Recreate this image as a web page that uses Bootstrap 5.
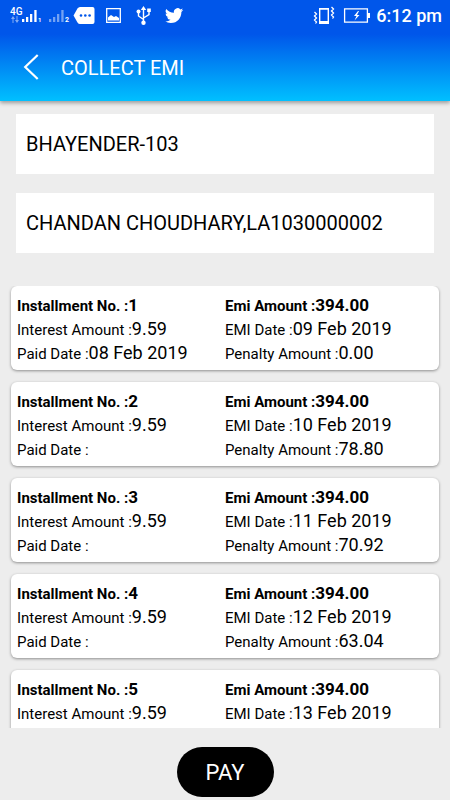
<!DOCTYPE html>
<html lang="en">
<head>
<meta charset="utf-8">
<meta name="viewport" content="width=device-width, initial-scale=1">
<title>Collect EMI</title>
<link href="https://cdn.jsdelivr.net/npm/bootstrap@5.3.0/dist/css/bootstrap.min.css" rel="stylesheet">
<style>
  body { font-family: Roboto, "Liberation Sans", sans-serif; background: #ededed; color: #000; }
  .app-top { background: linear-gradient(#0056ea 0, #0056ea 34px, #00c0ff 100%); box-shadow: 0 2px 4px rgba(0,0,0,.35); }
  .status-bar { height: 34px; padding: 0 8px 2px 10px; }
  .status-bar svg { flex: none; display: block; }
  .status-end { gap: 5px; }
  .clock { font-size: 18px; font-weight: 500; line-height: 32px; }
  .title-bar { height: 67px; padding: 0 22px; gap: 20px; }
  .title-bar h1 { font-size: 20px; line-height: 24px; font-weight: 400; }
  .back-btn { line-height: 0; }
  .fields { padding: 13px 16px 33px; gap: 19px; }
  .form-control.field { height: 60px; font-size: 20px; padding: 0 10px; color: #000; background: #fff; }
  .emi-list { padding: 0 11px; gap: 12px; min-height: 0; }
  .emi-card { height: 84px; flex: none; border-radius: 6px; padding: 8px 6px 4px; box-shadow: 0 1px 3px rgba(0,0,0,.4); font-size: 15px; line-height: 24px; }
  .emi-card .value { font-size: 18px; line-height: 20px; }
  .emi-card .fw-bold .value { font-size: 17px; }
  .footer-bar { height: 72px; padding-top: 19px; }
  .btn.pay-btn { width: 97px; height: 50px; border-radius: 25px; font-size: 22px; background: #000; color: #fff; }
</style>
</head>
<body class="vh-100 d-flex flex-column overflow-hidden">
<header class="app-top text-white flex-shrink-0">
  <div class="status-bar d-flex justify-content-between align-items-center">
    <svg width="176" height="28" viewBox="10 2 176 28" fill="#fff" aria-hidden="true">
      <text x="10" y="15" font-size="10" font-weight="500">4G</text>
      <g opacity=".5"><path d="M13 16l2 3h-1.500v4h-1v-4H11zM17 23l-2-3h1.500v-4h1v4H19z"/></g>
      <path d="M22 19h2.300v3H22zM26 17h2.300v5H26zM30 14h2.300v8H30zM34.300 10h2.300v12h-2.300z"/>
      <text x="38" y="22" font-size="6" font-weight="700">1</text>
      <path opacity=".45" d="M49 19h2.300v3H49zM53 17h2.300v5H53zM57 14h2.300v8H57zM61.300 10h2.300v12h-2.300z"/>
      <text x="65" y="22" font-size="7" font-weight="700">2</text>
      <path d="M80 7h12.500q2 0 2 2v13q0 2-2 2H80q-1.500 0-2.500-1.500L73.500 15.500 77.500 8.500Q78.500 7 80 7z"/>
      <g fill="#0056ea"><circle cx="81" cy="15.500" r="1.300"/><circle cx="85.300" cy="15.500" r="1.300"/><circle cx="89.600" cy="15.500" r="1.300"/></g>
      <path fill="none" stroke="#fff" stroke-width="1.300" d="M106.700 8.700h13.600v13.600h-13.600z"/>
      <path d="M108 20.500v-3l3-2.500 3 2 2-1 3 2v2.500z"/>
      <path fill="none" stroke="#fff" stroke-width="1.400" d="M143.500 9v14M143.500 19.500l-5-3.500v-4M143.500 18l5.500-3.500V11"/>
      <path d="M143.500 6l2.700 4h-5.400zM147.200 8.500h3.600v3.600h-3.600z"/><circle cx="138.500" cy="11.500" r="2"/><circle cx="143.500" cy="22.800" r="2.200"/>
      <path transform="translate(165 6.500) scale(.76)" d="M23.950 4.570a10 10 0 0 1-2.820.77 4.960 4.960 0 0 0 2.160-2.720c-.95.550-2 .960-3.130 1.180a4.920 4.920 0 0 0-8.380 4.480C7.690 8.090 4.070 6.130 1.640 3.160a4.930 4.930 0 0 0 1.520 6.570 4.900 4.900 0 0 1-2.230-.62v.06a4.920 4.920 0 0 0 3.950 4.830 5 5 0 0 1-2.210.08 4.940 4.940 0 0 0 4.600 3.420A9.870 9.870 0 0 1 0 19.540a14 14 0 0 0 7.550 2.210c9.050 0 14-7.500 14-13.980 0-.21 0-.42-.02-.63a9.940 9.940 0 0 0 2.460-2.550z"/>
    </svg>
    <div class="status-end d-flex align-items-center">
      <svg width="58" height="28" viewBox="313 2 58 28" fill="none" stroke="#fff" aria-hidden="true">
        <path stroke-width="1.400" d="M319.700 8.700h8.600v14.600h-8.600z"/>
        <path fill="#fff" stroke="none" d="M319 21h10v3h-10zM319 8h10v1.500h-10z"/>
        <path stroke-width="1.300" d="M314.500 12l2 2-2 2 2 2-2 2 2 2-1 1.500M331.500 7l2 2-2 2 2 2-2 2 2 2-1 1.500"/>
        <path stroke-width="1.300" d="M344.600 8.900h22.800v13.200h-22.800z"/>
        <path fill="#fff" stroke="none" d="M368 13h2v5h-2zM358 11l-4 5h2.500l-2 4.500 5-5.500H357l2-4z"/>
      </svg>
      <span class="clock">6:12 pm</span>
    </div>
  </div>
  <div class="title-bar d-flex align-items-center">
    <button type="button" class="back-btn btn p-0 border-0 text-white" aria-label="Back">
      <svg width="19" height="28" viewBox="0 0 19 28" fill="none" stroke="currentColor" stroke-width="2.200" aria-hidden="true"><path d="M15.700 1L3.200 13 15.700 25"/></svg>
    </button>
    <h1 class="m-0">COLLECT EMI</h1>
  </div>
</header>
<section class="fields d-flex flex-column flex-shrink-0">
  <input type="text" class="field form-control border-0 rounded-0" aria-label="Center" value="BHAYENDER-103">
  <input type="text" class="field form-control border-0 rounded-0" aria-label="Customer" value="CHANDAN CHOUDHARY,LA1030000002">
</section>
<main class="emi-list d-flex flex-column flex-grow-1 overflow-hidden">
  <article class="emi-card bg-white"><div class="row g-0">
    <div class="col-6 fw-bold">Installment No. :<span class="value">1</span></div><div class="col-6 fw-bold">Emi Amount :<span class="value">394.00</span></div>
    <div class="col-6">Interest Amount :<span class="value">9.59</span></div><div class="col-6">EMI Date :<span class="value">09 Feb 2019</span></div>
    <div class="col-6">Paid Date :<span class="value">08 Feb 2019</span></div><div class="col-6">Penalty Amount :<span class="value">0.00</span></div>
  </div></article>
  <article class="emi-card bg-white"><div class="row g-0">
    <div class="col-6 fw-bold">Installment No. :<span class="value">2</span></div><div class="col-6 fw-bold">Emi Amount :<span class="value">394.00</span></div>
    <div class="col-6">Interest Amount :<span class="value">9.59</span></div><div class="col-6">EMI Date :<span class="value">10 Feb 2019</span></div>
    <div class="col-6">Paid Date :</div><div class="col-6">Penalty Amount :<span class="value">78.80</span></div>
  </div></article>
  <article class="emi-card bg-white"><div class="row g-0">
    <div class="col-6 fw-bold">Installment No. :<span class="value">3</span></div><div class="col-6 fw-bold">Emi Amount :<span class="value">394.00</span></div>
    <div class="col-6">Interest Amount :<span class="value">9.59</span></div><div class="col-6">EMI Date :<span class="value">11 Feb 2019</span></div>
    <div class="col-6">Paid Date :</div><div class="col-6">Penalty Amount :<span class="value">70.92</span></div>
  </div></article>
  <article class="emi-card bg-white"><div class="row g-0">
    <div class="col-6 fw-bold">Installment No. :<span class="value">4</span></div><div class="col-6 fw-bold">Emi Amount :<span class="value">394.00</span></div>
    <div class="col-6">Interest Amount :<span class="value">9.59</span></div><div class="col-6">EMI Date :<span class="value">12 Feb 2019</span></div>
    <div class="col-6">Paid Date :</div><div class="col-6">Penalty Amount :<span class="value">63.04</span></div>
  </div></article>
  <article class="emi-card bg-white"><div class="row g-0">
    <div class="col-6 fw-bold">Installment No. :<span class="value">5</span></div><div class="col-6 fw-bold">Emi Amount :<span class="value">394.00</span></div>
    <div class="col-6">Interest Amount :<span class="value">9.59</span></div><div class="col-6">EMI Date :<span class="value">13 Feb 2019</span></div>
  </div></article>
</main>
<footer class="footer-bar flex-shrink-0 text-center">
  <button type="button" class="pay-btn btn border-0 p-0">PAY</button>
</footer>
<script src="https://cdn.jsdelivr.net/npm/bootstrap@5.3.0/dist/js/bootstrap.bundle.min.js"></script>
</body>
</html>
